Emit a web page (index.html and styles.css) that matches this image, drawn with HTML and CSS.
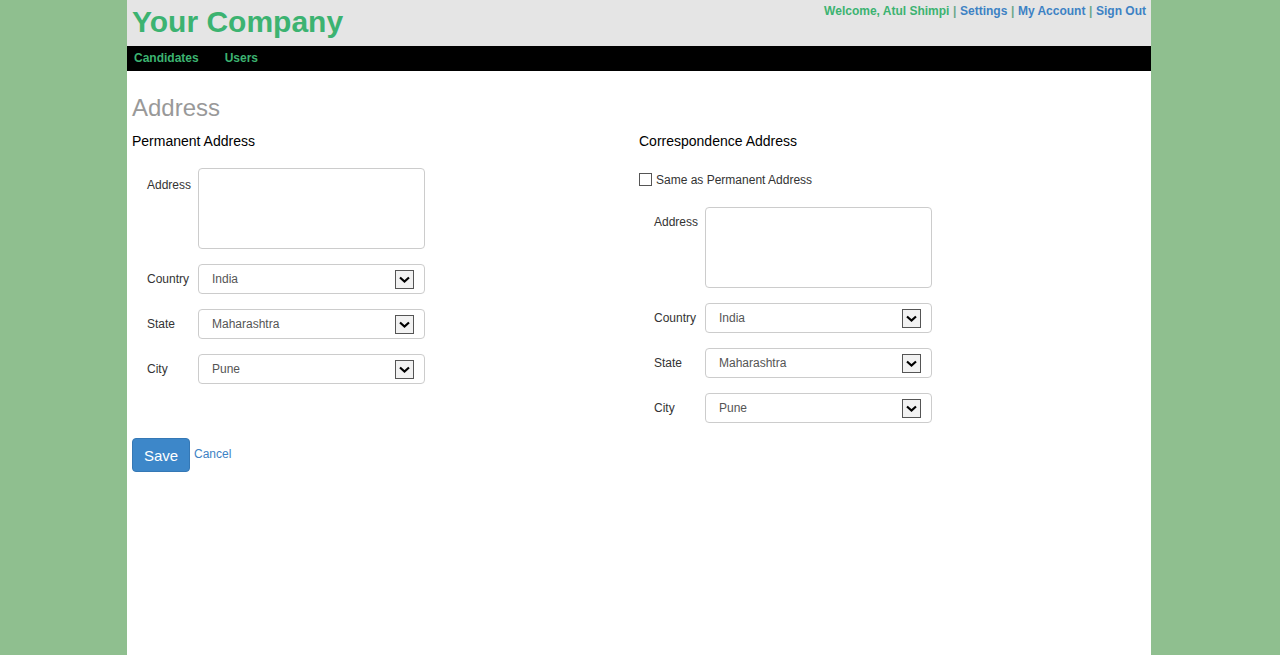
FILE: index.html
```html
<!DOCTYPE html>
<html>
<head>
<meta charset="utf-8">
<title>Address</title>
<link rel="stylesheet" href="styles.css">
</head>
<body>
<div class="page">
  <header class="header">
    <div class="brand">Your Company</div>
    <div class="userbar">
      <span class="welcome">Welcome, Atul Shimpi</span><span class="sep">|</span><a href="#" class="ulink">Settings</a><span class="sep">|</span><a href="#" class="ulink">My Account</a><span class="sep">|</span><a href="#" class="ulink">Sign Out</a>
    </div>
  </header>
  <nav class="nav">
    <a href="#" class="navlink">Candidates</a>
    <a href="#" class="navlink">Users</a>
  </nav>
  <main class="content">
    <h1 class="title">Address</h1>
    <div class="columns">
      <section class="col">
        <h2 class="subtitle">Permanent Address</h2>
        <div class="fields">
          <div class="row row-top">
            <label class="lbl">Address</label>
            <textarea class="area"></textarea>
          </div>
          <div class="row">
            <label class="lbl">Country</label>
            <div class="sel"><select class="selinput"><option>India</option></select><span class="arrow"><svg width="13" height="9" viewBox="0 0 13 9"><path d="M2 2.5 L6.5 6.5 L11 2.5" fill="none" stroke="#000" stroke-width="2.2"/></svg></span></div>
          </div>
          <div class="row">
            <label class="lbl">State</label>
            <div class="sel"><select class="selinput"><option>Maharashtra</option></select><span class="arrow"><svg width="13" height="9" viewBox="0 0 13 9"><path d="M2 2.5 L6.5 6.5 L11 2.5" fill="none" stroke="#000" stroke-width="2.2"/></svg></span></div>
          </div>
          <div class="row">
            <label class="lbl">City</label>
            <div class="sel"><select class="selinput"><option>Pune</option></select><span class="arrow"><svg width="13" height="9" viewBox="0 0 13 9"><path d="M2 2.5 L6.5 6.5 L11 2.5" fill="none" stroke="#000" stroke-width="2.2"/></svg></span></div>
          </div>
        </div>
      </section>
      <section class="col">
        <h2 class="subtitle">Correspondence Address</h2>
        <label class="check"><span class="box"></span>Same as Permanent Address</label>
        <div class="fields fields-right">
          <div class="row row-top">
            <label class="lbl lbl-right">Address</label>
            <textarea class="area"></textarea>
          </div>
          <div class="row">
            <label class="lbl">Country</label>
            <div class="sel"><select class="selinput"><option>India</option></select><span class="arrow"><svg width="13" height="9" viewBox="0 0 13 9"><path d="M2 2.5 L6.5 6.5 L11 2.5" fill="none" stroke="#000" stroke-width="2.2"/></svg></span></div>
          </div>
          <div class="row">
            <label class="lbl">State</label>
            <div class="sel"><select class="selinput"><option>Maharashtra</option></select><span class="arrow"><svg width="13" height="9" viewBox="0 0 13 9"><path d="M2 2.5 L6.5 6.5 L11 2.5" fill="none" stroke="#000" stroke-width="2.2"/></svg></span></div>
          </div>
          <div class="row">
            <label class="lbl">City</label>
            <div class="sel"><select class="selinput"><option>Pune</option></select><span class="arrow"><svg width="13" height="9" viewBox="0 0 13 9"><path d="M2 2.5 L6.5 6.5 L11 2.5" fill="none" stroke="#000" stroke-width="2.2"/></svg></span></div>
          </div>
        </div>
      </section>
    </div>
    <div class="actions">
      <button class="btn">Save</button>
      <a href="#" class="cancel">Cancel</a>
    </div>
  </main>
</div>
</body>
</html>
```
FILE: styles.css
```css
* { box-sizing: border-box; }
html, body { margin: 0; padding: 0; }
body {
  background: #8fbf8f;
  font-family: "Liberation Sans", Arial, sans-serif;
  color: #000;
}
.page {
  width: 1024px;
  margin-left: calc(50% - 513px);
  background: #fff;
  min-height: 100vh;
}
.header {
  background: #e5e5e5;
  height: 46px;
  display: flex;
  justify-content: space-between;
  padding: 0 5px 0 5px;
}
.brand {
  color: #3cb371;
  font-size: 30px;
  font-weight: bold;
  line-height: 44px;
}
.userbar {
  font-size: 12px;
  font-weight: bold;
  padding-top: 4px;
  line-height: 14px;
}
.welcome { color: #3cb371; }
.sep { color: #6aa88a; margin: 0 3.6px; }
.ulink { color: #3d82c4; text-decoration: none; }
.nav {
  background: #000;
  height: 25px;
  display: flex;
  align-items: center;
  padding-left: 7px;
  padding-bottom: 2px;
  gap: 26px;
}
.navlink {
  color: #3cb371;
  font-size: 12px;
  font-weight: bold;
  text-decoration: none;
}
.content { padding: 0 5px; }
.title {
  margin: 0;
  padding-top: 24px;
  font-size: 24px;
  font-weight: normal;
  color: #999;
  line-height: 26px;
}
.columns { display: flex; }
.col { width: 507px; }
.subtitle {
  margin: 0;
  padding-top: 12px;
  font-size: 14px;
  font-weight: normal;
  line-height: 17px;
  color: #000;
}
.fields {
  padding-left: 15px;
  padding-top: 18px;
  display: flex;
  flex-direction: column;
  gap: 15px;
}
.fields-right { padding-top: 20px; }
.row {
  display: flex;
  align-items: center;
}
.row-top { align-items: flex-start; }
.lbl {
  width: 51px;
  font-size: 12px;
  color: #333;
}
.row-top .lbl { padding-top: 10px; }
.row-top .lbl-right { padding-top: 8px; }
.area {
  width: 227px;
  height: 81px;
  border: 1px solid #ccc;
  border-radius: 4px;
  resize: none;
  margin: 0;
  display: block;
}
.sel {
  position: relative;
  width: 227px;
  height: 30px;
}
.selinput {
  appearance: none;
  -webkit-appearance: none;
  width: 100%;
  height: 30px;
  border: 1px solid #ccc;
  border-radius: 4px;
  background: #fff;
  font-family: "Liberation Sans", Arial, sans-serif;
  font-size: 12px;
  color: #555;
  padding: 0 0 0 13px;
  margin: 0;
}
.arrow {
  position: absolute;
  right: 11px;
  top: 6px;
  width: 19px;
  height: 19px;
  border: 1px solid #555;
  background: #f2f2f2;
  display: flex;
  align-items: center;
  justify-content: center;
  pointer-events: none;
}
.check {
  display: flex;
  align-items: center;
  margin-top: 23px;
  font-size: 12px;
  color: #333;
  line-height: 14px;
}
.box {
  width: 13px;
  height: 13px;
  border: 1px solid #555;
  margin-right: 4px;
  display: inline-block;
  position: relative;
  top: -1px;
}
.actions {
  display: flex;
  align-items: flex-start;
  padding-top: 15px;
}
.btn {
  width: 58px;
  height: 34px;
  background: #3d87c9;
  color: #fff;
  border: 1px solid #3578b5;
  border-radius: 4px;
  font-family: "Liberation Sans", Arial, sans-serif;
  font-size: 15px;
  padding: 0;
}
.cancel {
  color: #3d82c4;
  font-size: 12px;
  text-decoration: none;
  margin-left: 4px;
  margin-top: 9px;
}
```
